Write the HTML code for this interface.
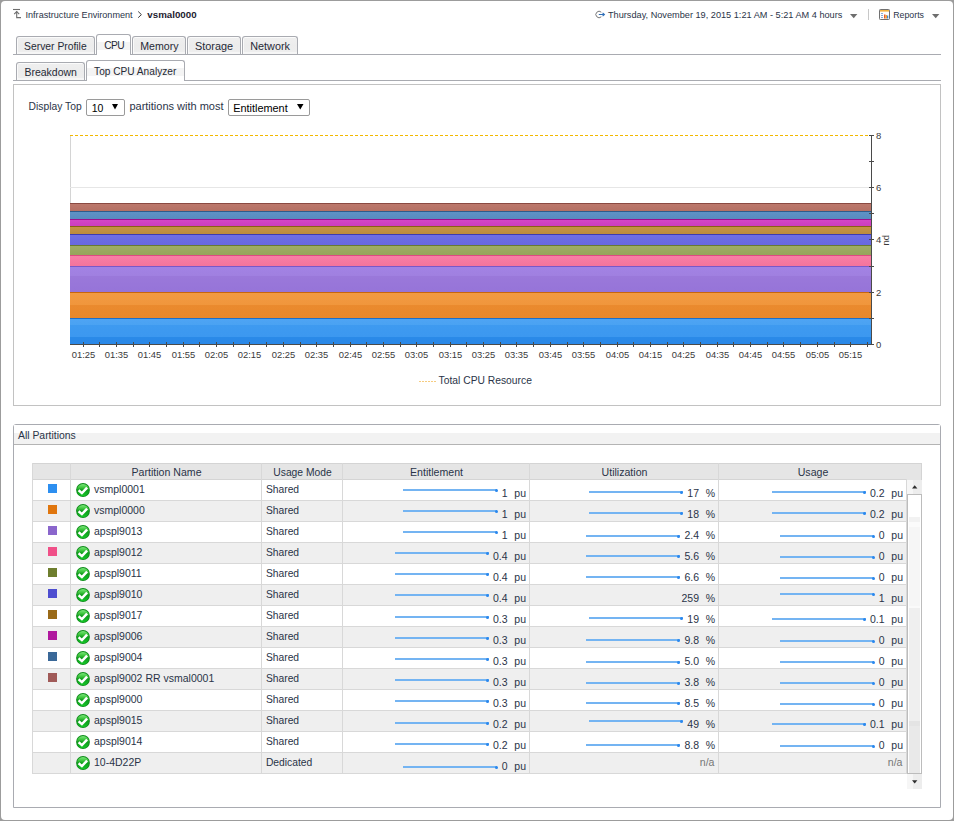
<!DOCTYPE html>
<html><head><meta charset="utf-8"><style>
html,body{margin:0;padding:0;}
body{width:954px;height:821px;overflow:hidden;background:#9c9c9c;position:relative;font-family:"Liberation Sans", sans-serif;}
.frame{position:absolute;left:1px;top:1px;width:952px;height:819px;background:#fff;border-radius:4px;}
.a{position:absolute;}
.t{position:absolute;white-space:nowrap;line-height:1;}
</style></head><body>
<div class="frame"></div>
<svg class="a" style="left:12px;top:8px" width="10" height="11" viewBox="0 0 10 11">
<path d="M1 1.5H8" stroke="#6e6e6e" stroke-width="1.1" fill="none"/>
<path d="M4.7 3.5V9.6H9" stroke="#6e6e6e" stroke-width="1.1" fill="none"/>
<path d="M2.2 6.2L4.7 3.6L7.2 6.2" stroke="#6e6e6e" stroke-width="1.1" fill="none"/>
</svg>
<div class="t" style="left:25.5px;top:11.00px;font-size:9.1px;color:#2a3448;">Infrastructure Environment</div>
<svg class="a" style="left:137px;top:10px" width="6" height="9"><path d="M1.2 1.5L4.4 4.6L1.2 7.7" stroke="#3a3a3a" stroke-width="1" fill="none"/></svg>
<div class="t" style="left:147.3px;top:10.00px;font-size:9.75px;color:#1e2230;font-weight:bold;">vsmal0000</div>
<svg class="a" style="left:595px;top:10px" width="11" height="9" viewBox="0 0 11 9">
<path d="M6.3 2.2A3.2 3.2 0 1 0 6.3 6.8" stroke="#777" stroke-width="1" fill="none"/>
<path d="M3.8 4.5H9.3M7.6 2.9L9.4 4.5L7.6 6.1" stroke="#2f6fb8" stroke-width="1.1" fill="none"/>
</svg>
<div class="t" style="left:608px;top:11.00px;font-size:9.19px;color:#2a3448;">Thursday, November 19, 2015 1:21 AM - 5:21 AM 4 hours</div>
<svg class="a" style="left:850px;top:14px" width="8" height="5"><path d="M0 0H7.4L3.7 4.2Z" fill="#6e6e6e"/></svg>
<div class="a" style="left:868px;top:9px;width:1px;height:11px;background:#c8c8c8"></div>
<svg class="a" style="left:879px;top:9px" width="11" height="11" viewBox="0 0 11 11">
<rect x="0.5" y="0.5" width="10" height="10" rx="0.8" fill="#fdfdfd" stroke="#707070"/>
<rect x="1" y="1" width="9" height="1.6" fill="#f2b440"/>
<path d="M2 4.5H4M2 6.5H4M2 8.5H4" stroke="#7aa0d0" stroke-width="0.9"/>
<rect x="5" y="5.5" width="1.5" height="4" fill="#e85a2a"/>
<rect x="6.5" y="6" width="1.5" height="3.5" fill="#f0a030"/>
<rect x="8" y="6.5" width="1.3" height="3" fill="#3a8ad8"/>
</svg>
<div class="t" style="left:893.2px;top:11.00px;font-size:8.8px;color:#2a3448;">Reports</div>
<svg class="a" style="left:932px;top:14px" width="8" height="5"><path d="M0 0H7.4L3.7 4.2Z" fill="#6e6e6e"/></svg>
<div class="a" style="left:13px;top:54px;width:928px;height:1px;background:#a9abb1"></div>
<div class="a" style="left:16px;top:36px;width:77px;height:17px;background:linear-gradient(#fbfbfb 0,#fbfbfb 1px,#efefef 1px,#ececec 50%,#eeeeee 90%,#f6f6f6 90%);border:1px solid #a9abb1;border-bottom:none;border-radius:3px 3px 0 0;box-shadow:inset 1px 0 0 #fafafa;"></div>
<div class="t" style="left:24.1px;top:42.00px;font-size:10.33px;color:#262a36;">Server Profile</div>
<div class="a" style="left:96px;top:34px;width:33px;height:20px;background:linear-gradient(#fff 0,#fff 7px,#f4f4f4 7px,#f4f4f4 15px,#fff 15px);border:1px solid #a9abb1;border-bottom:none;border-radius:3px 3px 0 0;"></div>
<div class="t" style="left:104.2px;top:41.00px;font-size:10.2px;color:#262a36;letter-spacing:-0.6px;">CPU</div>
<div class="a" style="left:132px;top:36px;width:52px;height:17px;background:linear-gradient(#fbfbfb 0,#fbfbfb 1px,#efefef 1px,#ececec 50%,#eeeeee 90%,#f6f6f6 90%);border:1px solid #a9abb1;border-bottom:none;border-radius:3px 3px 0 0;box-shadow:inset 1px 0 0 #fafafa;"></div>
<div class="t" style="left:140.3px;top:41.00px;font-size:10.6px;color:#262a36;">Memory</div>
<div class="a" style="left:187px;top:36px;width:52px;height:17px;background:linear-gradient(#fbfbfb 0,#fbfbfb 1px,#efefef 1px,#ececec 50%,#eeeeee 90%,#f6f6f6 90%);border:1px solid #a9abb1;border-bottom:none;border-radius:3px 3px 0 0;box-shadow:inset 1px 0 0 #fafafa;"></div>
<div class="t" style="left:195px;top:41.00px;font-size:10.86px;color:#262a36;">Storage</div>
<div class="a" style="left:242px;top:36px;width:54px;height:17px;background:linear-gradient(#fbfbfb 0,#fbfbfb 1px,#efefef 1px,#ececec 50%,#eeeeee 90%,#f6f6f6 90%);border:1px solid #a9abb1;border-bottom:none;border-radius:3px 3px 0 0;box-shadow:inset 1px 0 0 #fafafa;"></div>
<div class="t" style="left:250.3px;top:41.00px;font-size:10.8px;color:#262a36;">Network</div>
<div class="a" style="left:13px;top:80px;width:928px;height:1px;background:#a9abb1"></div>
<div class="a" style="left:16px;top:62px;width:67px;height:17px;background:linear-gradient(#fbfbfb 0,#fbfbfb 1px,#efefef 1px,#ececec 50%,#eeeeee 90%,#f6f6f6 90%);border:1px solid #a9abb1;border-bottom:none;border-radius:3px 3px 0 0;box-shadow:inset 1px 0 0 #fafafa;"></div>
<div class="t" style="left:24.4px;top:67.00px;font-size:10.5px;color:#262a36;">Breakdown</div>
<div class="a" style="left:86px;top:60px;width:97px;height:20px;background:linear-gradient(#fff 0,#fff 7px,#f4f4f4 7px,#f4f4f4 15px,#fff 15px);border:1px solid #a9abb1;border-bottom:none;border-radius:3px 3px 0 0;"></div>
<div class="t" style="left:94.1px;top:67.00px;font-size:10.15px;color:#262a36;">Top CPU Analyzer</div>
<div class="a" style="left:13px;top:84px;width:926px;height:320px;border:1px solid #c2c2c2;background:#fff"></div>
<div class="t" style="left:28.6px;top:102.00px;font-size:10.3px;color:#2a3448;">Display Top</div>
<div class="a" style="left:86px;top:99px;width:37px;height:15px;border:1px solid #9a9a9a;border-radius:2px;background:#fff"></div>
<div class="t" style="left:91.7px;top:103.00px;font-size:10.5px;color:#000;">10</div>
<svg class="a" style="left:112px;top:104px" width="6" height="6"><path d="M0 0H6L3 5.5Z" fill="#000"/></svg>
<div class="t" style="left:129.4px;top:101.00px;font-size:11px;color:#2a3448;">partitions with most</div>
<div class="a" style="left:228px;top:99px;width:80px;height:15px;border:1px solid #9a9a9a;border-radius:2px;background:#fff"></div>
<div class="t" style="left:233.2px;top:103.00px;font-size:10.9px;color:#000;">Entitlement</div>
<svg class="a" style="left:297px;top:104px" width="7" height="6"><path d="M0 0H6.5L3.25 5.5Z" fill="#000"/></svg>
<div class="a" style="left:70px;top:135px;width:1px;height:209px;background:#d4d4d4"></div>
<div class="a" style="left:70px;top:187px;width:801px;height:1px;background:#e6e6e6"></div>
<div class="a" style="left:70px;top:240px;width:801px;height:1px;background:#e6e6e6"></div>
<div class="a" style="left:70px;top:292px;width:801px;height:1px;background:#e6e6e6"></div>
<div class="a" style="left:70px;top:203px;width:801px;height:8px;background:linear-gradient(#bc786c,#b47064);border-top:1px solid #8a4a42;box-sizing:border-box"></div>
<div class="a" style="left:70px;top:211px;width:801px;height:8px;background:linear-gradient(#5e92c6,#588cc0);border-top:1px solid #2e5c8c;box-sizing:border-box"></div>
<div class="a" style="left:70px;top:219px;width:801px;height:7px;background:linear-gradient(#d446c6,#cc3ebe);border-top:1px solid #9a1090;box-sizing:border-box"></div>
<div class="a" style="left:70px;top:226px;width:801px;height:8px;background:linear-gradient(#c49444,#bc8c3c);border-top:1px solid #8a6014;box-sizing:border-box"></div>
<div class="a" style="left:70px;top:234px;width:801px;height:11px;background:linear-gradient(#6e6ee4,#6868de);border-top:1px solid #3c3cb0;box-sizing:border-box"></div>
<div class="a" style="left:70px;top:245px;width:801px;height:10px;background:linear-gradient(#9eac64,#96a45c);border-top:1px solid #687a30;box-sizing:border-box"></div>
<div class="a" style="left:70px;top:255px;width:801px;height:11px;background:linear-gradient(#f87ea6,#f4749c);border-top:1px solid #de4a82;box-sizing:border-box"></div>
<div class="a" style="left:70px;top:266px;width:801px;height:26px;background:linear-gradient(#a282e4 0,#a080e0 38%,#9a78da 38%,#9674d8 100%);border-top:1px solid #7a58c8;box-sizing:border-box"></div>
<div class="a" style="left:70px;top:292px;width:801px;height:26px;background:linear-gradient(#f29a42 0,#f0963c 48%,#ea8a2e 48%,#e8882c 100%);border-top:1px solid #c8660e;box-sizing:border-box"></div>
<div class="a" style="left:70px;top:318px;width:801px;height:26px;background:linear-gradient(#4ea4f4 0,#4aa2f2 26%,#3e9af0 26%,#3c98f0 72%,#2a8ae8 72%,#2a88e8 100%);border-top:1px solid #1e6ec8;box-sizing:border-box"></div>
<div class="a" style="left:70px;top:135px;width:801px;height:1px;background:repeating-linear-gradient(90deg,#f2b800 0,#f2b800 3px,transparent 3px,transparent 5px)"></div>
<div class="a" style="left:871px;top:135px;width:1px;height:210px;background:#4a4a4a"></div>
<div class="a" style="left:869px;top:135px;width:5px;height:1px;background:#4a4a4a"></div>
<div class="a" style="left:869px;top:161px;width:5px;height:1px;background:#4a4a4a"></div>
<div class="a" style="left:869px;top:187px;width:5px;height:1px;background:#4a4a4a"></div>
<div class="a" style="left:869px;top:213px;width:5px;height:1px;background:#4a4a4a"></div>
<div class="a" style="left:869px;top:239px;width:5px;height:1px;background:#4a4a4a"></div>
<div class="a" style="left:869px;top:266px;width:5px;height:1px;background:#4a4a4a"></div>
<div class="a" style="left:869px;top:292px;width:5px;height:1px;background:#4a4a4a"></div>
<div class="a" style="left:869px;top:318px;width:5px;height:1px;background:#4a4a4a"></div>
<div class="a" style="left:869px;top:344px;width:5px;height:1px;background:#4a4a4a"></div>
<div class="t" style="left:876px;top:340.00px;font-size:9.5px;color:#3a3a3a;">0</div>
<div class="t" style="left:876px;top:288.00px;font-size:9.5px;color:#3a3a3a;">2</div>
<div class="t" style="left:876px;top:235.00px;font-size:9.5px;color:#3a3a3a;">4</div>
<div class="t" style="left:876px;top:183.00px;font-size:9.5px;color:#3a3a3a;">6</div>
<div class="t" style="left:876px;top:131.00px;font-size:9.5px;color:#3a3a3a;">8</div>
<div class="t" style="top:234.5px;left:891.5px;font-size:9.5px;color:#3a3a3a;transform:rotate(90deg);transform-origin:0 0;">pu</div>
<div class="a" style="left:70px;top:344px;width:802px;height:1px;background:#4a4a4a"></div>
<div class="a" style="left:83px;top:342px;width:1px;height:5px;background:#4a4a4a"></div>
<div class="a" style="left:99px;top:342px;width:1px;height:5px;background:#4a4a4a"></div>
<div class="a" style="left:116px;top:342px;width:1px;height:5px;background:#4a4a4a"></div>
<div class="a" style="left:133px;top:342px;width:1px;height:5px;background:#4a4a4a"></div>
<div class="a" style="left:149px;top:342px;width:1px;height:5px;background:#4a4a4a"></div>
<div class="a" style="left:166px;top:342px;width:1px;height:5px;background:#4a4a4a"></div>
<div class="a" style="left:183px;top:342px;width:1px;height:5px;background:#4a4a4a"></div>
<div class="a" style="left:199px;top:342px;width:1px;height:5px;background:#4a4a4a"></div>
<div class="a" style="left:216px;top:342px;width:1px;height:5px;background:#4a4a4a"></div>
<div class="a" style="left:233px;top:342px;width:1px;height:5px;background:#4a4a4a"></div>
<div class="a" style="left:249px;top:342px;width:1px;height:5px;background:#4a4a4a"></div>
<div class="a" style="left:266px;top:342px;width:1px;height:5px;background:#4a4a4a"></div>
<div class="a" style="left:283px;top:342px;width:1px;height:5px;background:#4a4a4a"></div>
<div class="a" style="left:300px;top:342px;width:1px;height:5px;background:#4a4a4a"></div>
<div class="a" style="left:316px;top:342px;width:1px;height:5px;background:#4a4a4a"></div>
<div class="a" style="left:333px;top:342px;width:1px;height:5px;background:#4a4a4a"></div>
<div class="a" style="left:350px;top:342px;width:1px;height:5px;background:#4a4a4a"></div>
<div class="a" style="left:366px;top:342px;width:1px;height:5px;background:#4a4a4a"></div>
<div class="a" style="left:383px;top:342px;width:1px;height:5px;background:#4a4a4a"></div>
<div class="a" style="left:400px;top:342px;width:1px;height:5px;background:#4a4a4a"></div>
<div class="a" style="left:416px;top:342px;width:1px;height:5px;background:#4a4a4a"></div>
<div class="a" style="left:433px;top:342px;width:1px;height:5px;background:#4a4a4a"></div>
<div class="a" style="left:450px;top:342px;width:1px;height:5px;background:#4a4a4a"></div>
<div class="a" style="left:466px;top:342px;width:1px;height:5px;background:#4a4a4a"></div>
<div class="a" style="left:483px;top:342px;width:1px;height:5px;background:#4a4a4a"></div>
<div class="a" style="left:500px;top:342px;width:1px;height:5px;background:#4a4a4a"></div>
<div class="a" style="left:516px;top:342px;width:1px;height:5px;background:#4a4a4a"></div>
<div class="a" style="left:533px;top:342px;width:1px;height:5px;background:#4a4a4a"></div>
<div class="a" style="left:550px;top:342px;width:1px;height:5px;background:#4a4a4a"></div>
<div class="a" style="left:567px;top:342px;width:1px;height:5px;background:#4a4a4a"></div>
<div class="a" style="left:583px;top:342px;width:1px;height:5px;background:#4a4a4a"></div>
<div class="a" style="left:600px;top:342px;width:1px;height:5px;background:#4a4a4a"></div>
<div class="a" style="left:617px;top:342px;width:1px;height:5px;background:#4a4a4a"></div>
<div class="a" style="left:633px;top:342px;width:1px;height:5px;background:#4a4a4a"></div>
<div class="a" style="left:650px;top:342px;width:1px;height:5px;background:#4a4a4a"></div>
<div class="a" style="left:667px;top:342px;width:1px;height:5px;background:#4a4a4a"></div>
<div class="a" style="left:683px;top:342px;width:1px;height:5px;background:#4a4a4a"></div>
<div class="a" style="left:700px;top:342px;width:1px;height:5px;background:#4a4a4a"></div>
<div class="a" style="left:717px;top:342px;width:1px;height:5px;background:#4a4a4a"></div>
<div class="a" style="left:733px;top:342px;width:1px;height:5px;background:#4a4a4a"></div>
<div class="a" style="left:750px;top:342px;width:1px;height:5px;background:#4a4a4a"></div>
<div class="a" style="left:767px;top:342px;width:1px;height:5px;background:#4a4a4a"></div>
<div class="a" style="left:783px;top:342px;width:1px;height:5px;background:#4a4a4a"></div>
<div class="a" style="left:800px;top:342px;width:1px;height:5px;background:#4a4a4a"></div>
<div class="a" style="left:817px;top:342px;width:1px;height:5px;background:#4a4a4a"></div>
<div class="a" style="left:834px;top:342px;width:1px;height:5px;background:#4a4a4a"></div>
<div class="a" style="left:850px;top:342px;width:1px;height:5px;background:#4a4a4a"></div>
<div class="a" style="left:867px;top:342px;width:1px;height:5px;background:#4a4a4a"></div>
<div class="t" style="left:-16.5px;width:200px;text-align:center;top:350.00px;font-size:9.4px;color:#3a3a3a;">01:25</div>
<div class="t" style="left:16.5px;width:200px;text-align:center;top:350.00px;font-size:9.4px;color:#3a3a3a;">01:35</div>
<div class="t" style="left:49.5px;width:200px;text-align:center;top:350.00px;font-size:9.4px;color:#3a3a3a;">01:45</div>
<div class="t" style="left:83.5px;width:200px;text-align:center;top:350.00px;font-size:9.4px;color:#3a3a3a;">01:55</div>
<div class="t" style="left:116.5px;width:200px;text-align:center;top:350.00px;font-size:9.4px;color:#3a3a3a;">02:05</div>
<div class="t" style="left:149.5px;width:200px;text-align:center;top:350.00px;font-size:9.4px;color:#3a3a3a;">02:15</div>
<div class="t" style="left:183.5px;width:200px;text-align:center;top:350.00px;font-size:9.4px;color:#3a3a3a;">02:25</div>
<div class="t" style="left:216.5px;width:200px;text-align:center;top:350.00px;font-size:9.4px;color:#3a3a3a;">02:35</div>
<div class="t" style="left:250.5px;width:200px;text-align:center;top:350.00px;font-size:9.4px;color:#3a3a3a;">02:45</div>
<div class="t" style="left:283.5px;width:200px;text-align:center;top:350.00px;font-size:9.4px;color:#3a3a3a;">02:55</div>
<div class="t" style="left:316.5px;width:200px;text-align:center;top:350.00px;font-size:9.4px;color:#3a3a3a;">03:05</div>
<div class="t" style="left:350.5px;width:200px;text-align:center;top:350.00px;font-size:9.4px;color:#3a3a3a;">03:15</div>
<div class="t" style="left:383.5px;width:200px;text-align:center;top:350.00px;font-size:9.4px;color:#3a3a3a;">03:25</div>
<div class="t" style="left:416.5px;width:200px;text-align:center;top:350.00px;font-size:9.4px;color:#3a3a3a;">03:35</div>
<div class="t" style="left:450.5px;width:200px;text-align:center;top:350.00px;font-size:9.4px;color:#3a3a3a;">03:45</div>
<div class="t" style="left:483.5px;width:200px;text-align:center;top:350.00px;font-size:9.4px;color:#3a3a3a;">03:55</div>
<div class="t" style="left:517.5px;width:200px;text-align:center;top:350.00px;font-size:9.4px;color:#3a3a3a;">04:05</div>
<div class="t" style="left:550.5px;width:200px;text-align:center;top:350.00px;font-size:9.4px;color:#3a3a3a;">04:15</div>
<div class="t" style="left:583.5px;width:200px;text-align:center;top:350.00px;font-size:9.4px;color:#3a3a3a;">04:25</div>
<div class="t" style="left:617.5px;width:200px;text-align:center;top:350.00px;font-size:9.4px;color:#3a3a3a;">04:35</div>
<div class="t" style="left:650.5px;width:200px;text-align:center;top:350.00px;font-size:9.4px;color:#3a3a3a;">04:45</div>
<div class="t" style="left:683.5px;width:200px;text-align:center;top:350.00px;font-size:9.4px;color:#3a3a3a;">04:55</div>
<div class="t" style="left:717.5px;width:200px;text-align:center;top:350.00px;font-size:9.4px;color:#3a3a3a;">05:05</div>
<div class="t" style="left:750.5px;width:200px;text-align:center;top:350.00px;font-size:9.4px;color:#3a3a3a;">05:15</div>
<div class="a" style="left:419px;top:381px;width:17px;height:1px;background:repeating-linear-gradient(90deg,#f6cc80 0,#f6cc80 2px,transparent 2px,transparent 3px)"></div>
<div class="t" style="left:438.6px;top:376.00px;font-size:10.3px;color:#2a3448;">Total CPU Resource</div>
<div class="a" style="left:13px;top:424px;width:926px;height:382px;border:1px solid #a9abb1;border-radius:3px 3px 0 0;background:#fff"></div>
<div class="a" style="left:14px;top:425px;width:926px;height:19px;background:linear-gradient(#fff 0,#fff 40%,#f2f2f2 40%,#f2f2f2 100%);border-bottom:1px solid #b4b4b4;box-sizing:border-box;height:20px"></div>
<div class="t" style="left:18px;top:431.00px;font-size:10.4px;color:#2a3448;">All Partitions</div>
<div class="a" style="left:32px;top:463px;width:890px;height:17px;background:#e5e5e5;border-top:1px solid #d4d4d4;box-sizing:border-box"></div>
<div class="a" style="left:32px;top:479px;width:874px;height:1px;background:#d4d4d4"></div>
<div class="a" style="left:32px;top:480px;width:874px;height:20px;background:#ffffff"></div>
<div class="a" style="left:32px;top:500px;width:874px;height:1px;background:#d8d8d8"></div>
<div class="a" style="left:32px;top:501px;width:874px;height:20px;background:#efefef"></div>
<div class="a" style="left:32px;top:521px;width:874px;height:1px;background:#d8d8d8"></div>
<div class="a" style="left:32px;top:522px;width:874px;height:20px;background:#ffffff"></div>
<div class="a" style="left:32px;top:542px;width:874px;height:1px;background:#d8d8d8"></div>
<div class="a" style="left:32px;top:543px;width:874px;height:20px;background:#efefef"></div>
<div class="a" style="left:32px;top:563px;width:874px;height:1px;background:#d8d8d8"></div>
<div class="a" style="left:32px;top:564px;width:874px;height:20px;background:#ffffff"></div>
<div class="a" style="left:32px;top:584px;width:874px;height:1px;background:#d8d8d8"></div>
<div class="a" style="left:32px;top:585px;width:874px;height:20px;background:#efefef"></div>
<div class="a" style="left:32px;top:605px;width:874px;height:1px;background:#d8d8d8"></div>
<div class="a" style="left:32px;top:606px;width:874px;height:20px;background:#ffffff"></div>
<div class="a" style="left:32px;top:626px;width:874px;height:1px;background:#d8d8d8"></div>
<div class="a" style="left:32px;top:627px;width:874px;height:20px;background:#efefef"></div>
<div class="a" style="left:32px;top:647px;width:874px;height:1px;background:#d8d8d8"></div>
<div class="a" style="left:32px;top:648px;width:874px;height:20px;background:#ffffff"></div>
<div class="a" style="left:32px;top:668px;width:874px;height:1px;background:#d8d8d8"></div>
<div class="a" style="left:32px;top:669px;width:874px;height:20px;background:#efefef"></div>
<div class="a" style="left:32px;top:689px;width:874px;height:1px;background:#d8d8d8"></div>
<div class="a" style="left:32px;top:690px;width:874px;height:20px;background:#ffffff"></div>
<div class="a" style="left:32px;top:710px;width:874px;height:1px;background:#d8d8d8"></div>
<div class="a" style="left:32px;top:711px;width:874px;height:20px;background:#efefef"></div>
<div class="a" style="left:32px;top:731px;width:874px;height:1px;background:#d8d8d8"></div>
<div class="a" style="left:32px;top:732px;width:874px;height:20px;background:#ffffff"></div>
<div class="a" style="left:32px;top:752px;width:874px;height:1px;background:#d8d8d8"></div>
<div class="a" style="left:32px;top:753px;width:874px;height:20px;background:#efefef"></div>
<div class="a" style="left:32px;top:773px;width:874px;height:1px;background:#d8d8d8"></div>
<div class="a" style="left:32px;top:463px;width:1px;height:311px;background:#d8d8d8"></div>
<div class="a" style="left:70px;top:463px;width:1px;height:311px;background:#d8d8d8"></div>
<div class="a" style="left:261px;top:463px;width:1px;height:311px;background:#d8d8d8"></div>
<div class="a" style="left:342px;top:463px;width:1px;height:311px;background:#d8d8d8"></div>
<div class="a" style="left:529px;top:463px;width:1px;height:311px;background:#d8d8d8"></div>
<div class="a" style="left:718px;top:463px;width:1px;height:311px;background:#d8d8d8"></div>
<div class="a" style="left:906px;top:479px;width:1px;height:295px;background:#d8d8d8"></div>
<div class="a" style="left:921px;top:463px;width:1px;height:17px;background:#d4d4d4"></div>
<div class="t" style="left:66.5px;width:200px;text-align:center;top:467.00px;font-size:10.6px;color:#2a3448;">Partition Name</div>
<div class="t" style="left:202.5px;width:200px;text-align:center;top:468.00px;font-size:10.3px;color:#2a3448;">Usage Mode</div>
<div class="t" style="left:336.5px;width:200px;text-align:center;top:467.00px;font-size:10.6px;color:#2a3448;">Entitlement</div>
<div class="t" style="left:524.5px;width:200px;text-align:center;top:467.00px;font-size:10.6px;color:#2a3448;">Utilization</div>
<div class="t" style="left:713.0px;width:200px;text-align:center;top:467.00px;font-size:10.6px;color:#2a3448;">Usage</div>
<svg width="0" height="0" style="position:absolute"><defs><linearGradient id="cg" x1="0" y1="0" x2="0" y2="1"><stop offset="0" stop-color="#7ae87a"/><stop offset="0.3" stop-color="#3cc43c"/><stop offset="0.5" stop-color="#0e9a1c"/><stop offset="1" stop-color="#14c828"/></linearGradient></defs></svg>
<div class="a" style="left:48px;top:484px;width:9px;height:9px;background:#2d8ff0"></div>
<svg class="a" style="left:76px;top:483px" width="14" height="14" viewBox="0 0 14 14">
<circle cx="7" cy="7" r="6.9" fill="#0c8a18"/>
<circle cx="7" cy="7.1" r="6.1" fill="url(#cg)"/>
<path d="M2.6 7.3L5.9 10.1L11.1 4.6" stroke="#fff" stroke-width="2.5" fill="none" stroke-linejoin="miter"/>
</svg>
<div class="t" style="left:94px;top:484.00px;font-size:10.5px;color:#2a3448;">vsmpl0001</div>
<div class="t" style="left:265.9px;top:485.00px;font-size:10.3px;color:#2a3448;">Shared</div>
<div class="a" style="left:48px;top:505px;width:9px;height:9px;background:#e0760e"></div>
<svg class="a" style="left:76px;top:504px" width="14" height="14" viewBox="0 0 14 14">
<circle cx="7" cy="7" r="6.9" fill="#0c8a18"/>
<circle cx="7" cy="7.1" r="6.1" fill="url(#cg)"/>
<path d="M2.6 7.3L5.9 10.1L11.1 4.6" stroke="#fff" stroke-width="2.5" fill="none" stroke-linejoin="miter"/>
</svg>
<div class="t" style="left:94px;top:505.00px;font-size:10.5px;color:#2a3448;">vsmpl0000</div>
<div class="t" style="left:265.9px;top:506.00px;font-size:10.3px;color:#2a3448;">Shared</div>
<div class="a" style="left:48px;top:526px;width:9px;height:9px;background:#8a66cc"></div>
<svg class="a" style="left:76px;top:525px" width="14" height="14" viewBox="0 0 14 14">
<circle cx="7" cy="7" r="6.9" fill="#0c8a18"/>
<circle cx="7" cy="7.1" r="6.1" fill="url(#cg)"/>
<path d="M2.6 7.3L5.9 10.1L11.1 4.6" stroke="#fff" stroke-width="2.5" fill="none" stroke-linejoin="miter"/>
</svg>
<div class="t" style="left:94px;top:526.00px;font-size:10.5px;color:#2a3448;">apspl9013</div>
<div class="t" style="left:265.9px;top:527.00px;font-size:10.3px;color:#2a3448;">Shared</div>
<div class="a" style="left:48px;top:547px;width:9px;height:9px;background:#f05088"></div>
<svg class="a" style="left:76px;top:546px" width="14" height="14" viewBox="0 0 14 14">
<circle cx="7" cy="7" r="6.9" fill="#0c8a18"/>
<circle cx="7" cy="7.1" r="6.1" fill="url(#cg)"/>
<path d="M2.6 7.3L5.9 10.1L11.1 4.6" stroke="#fff" stroke-width="2.5" fill="none" stroke-linejoin="miter"/>
</svg>
<div class="t" style="left:94px;top:547.00px;font-size:10.5px;color:#2a3448;">apspl9012</div>
<div class="t" style="left:265.9px;top:548.00px;font-size:10.3px;color:#2a3448;">Shared</div>
<div class="a" style="left:48px;top:568px;width:9px;height:9px;background:#6e7e2e"></div>
<svg class="a" style="left:76px;top:567px" width="14" height="14" viewBox="0 0 14 14">
<circle cx="7" cy="7" r="6.9" fill="#0c8a18"/>
<circle cx="7" cy="7.1" r="6.1" fill="url(#cg)"/>
<path d="M2.6 7.3L5.9 10.1L11.1 4.6" stroke="#fff" stroke-width="2.5" fill="none" stroke-linejoin="miter"/>
</svg>
<div class="t" style="left:94px;top:568.00px;font-size:10.5px;color:#2a3448;">apspl9011</div>
<div class="t" style="left:265.9px;top:569.00px;font-size:10.3px;color:#2a3448;">Shared</div>
<div class="a" style="left:48px;top:589px;width:9px;height:9px;background:#4e4ed0"></div>
<svg class="a" style="left:76px;top:588px" width="14" height="14" viewBox="0 0 14 14">
<circle cx="7" cy="7" r="6.9" fill="#0c8a18"/>
<circle cx="7" cy="7.1" r="6.1" fill="url(#cg)"/>
<path d="M2.6 7.3L5.9 10.1L11.1 4.6" stroke="#fff" stroke-width="2.5" fill="none" stroke-linejoin="miter"/>
</svg>
<div class="t" style="left:94px;top:589.00px;font-size:10.5px;color:#2a3448;">apspl9010</div>
<div class="t" style="left:265.9px;top:590.00px;font-size:10.3px;color:#2a3448;">Shared</div>
<div class="a" style="left:48px;top:610px;width:9px;height:9px;background:#9a6a18"></div>
<svg class="a" style="left:76px;top:609px" width="14" height="14" viewBox="0 0 14 14">
<circle cx="7" cy="7" r="6.9" fill="#0c8a18"/>
<circle cx="7" cy="7.1" r="6.1" fill="url(#cg)"/>
<path d="M2.6 7.3L5.9 10.1L11.1 4.6" stroke="#fff" stroke-width="2.5" fill="none" stroke-linejoin="miter"/>
</svg>
<div class="t" style="left:94px;top:610.00px;font-size:10.5px;color:#2a3448;">apspl9017</div>
<div class="t" style="left:265.9px;top:611.00px;font-size:10.3px;color:#2a3448;">Shared</div>
<div class="a" style="left:48px;top:631px;width:9px;height:9px;background:#b0189e"></div>
<svg class="a" style="left:76px;top:630px" width="14" height="14" viewBox="0 0 14 14">
<circle cx="7" cy="7" r="6.9" fill="#0c8a18"/>
<circle cx="7" cy="7.1" r="6.1" fill="url(#cg)"/>
<path d="M2.6 7.3L5.9 10.1L11.1 4.6" stroke="#fff" stroke-width="2.5" fill="none" stroke-linejoin="miter"/>
</svg>
<div class="t" style="left:94px;top:631.00px;font-size:10.5px;color:#2a3448;">apspl9006</div>
<div class="t" style="left:265.9px;top:632.00px;font-size:10.3px;color:#2a3448;">Shared</div>
<div class="a" style="left:48px;top:652px;width:9px;height:9px;background:#3a6898"></div>
<svg class="a" style="left:76px;top:651px" width="14" height="14" viewBox="0 0 14 14">
<circle cx="7" cy="7" r="6.9" fill="#0c8a18"/>
<circle cx="7" cy="7.1" r="6.1" fill="url(#cg)"/>
<path d="M2.6 7.3L5.9 10.1L11.1 4.6" stroke="#fff" stroke-width="2.5" fill="none" stroke-linejoin="miter"/>
</svg>
<div class="t" style="left:94px;top:652.00px;font-size:10.5px;color:#2a3448;">apspl9004</div>
<div class="t" style="left:265.9px;top:653.00px;font-size:10.3px;color:#2a3448;">Shared</div>
<div class="a" style="left:48px;top:673px;width:9px;height:9px;background:#a05a58"></div>
<svg class="a" style="left:76px;top:672px" width="14" height="14" viewBox="0 0 14 14">
<circle cx="7" cy="7" r="6.9" fill="#0c8a18"/>
<circle cx="7" cy="7.1" r="6.1" fill="url(#cg)"/>
<path d="M2.6 7.3L5.9 10.1L11.1 4.6" stroke="#fff" stroke-width="2.5" fill="none" stroke-linejoin="miter"/>
</svg>
<div class="t" style="left:94px;top:673.00px;font-size:10.5px;color:#2a3448;">apspl9002 RR vsmal0001</div>
<div class="t" style="left:265.9px;top:674.00px;font-size:10.3px;color:#2a3448;">Shared</div>
<svg class="a" style="left:76px;top:693px" width="14" height="14" viewBox="0 0 14 14">
<circle cx="7" cy="7" r="6.9" fill="#0c8a18"/>
<circle cx="7" cy="7.1" r="6.1" fill="url(#cg)"/>
<path d="M2.6 7.3L5.9 10.1L11.1 4.6" stroke="#fff" stroke-width="2.5" fill="none" stroke-linejoin="miter"/>
</svg>
<div class="t" style="left:94px;top:694.00px;font-size:10.5px;color:#2a3448;">apspl9000</div>
<div class="t" style="left:265.9px;top:695.00px;font-size:10.3px;color:#2a3448;">Shared</div>
<svg class="a" style="left:76px;top:714px" width="14" height="14" viewBox="0 0 14 14">
<circle cx="7" cy="7" r="6.9" fill="#0c8a18"/>
<circle cx="7" cy="7.1" r="6.1" fill="url(#cg)"/>
<path d="M2.6 7.3L5.9 10.1L11.1 4.6" stroke="#fff" stroke-width="2.5" fill="none" stroke-linejoin="miter"/>
</svg>
<div class="t" style="left:94px;top:715.00px;font-size:10.5px;color:#2a3448;">apspl9015</div>
<div class="t" style="left:265.9px;top:716.00px;font-size:10.3px;color:#2a3448;">Shared</div>
<svg class="a" style="left:76px;top:735px" width="14" height="14" viewBox="0 0 14 14">
<circle cx="7" cy="7" r="6.9" fill="#0c8a18"/>
<circle cx="7" cy="7.1" r="6.1" fill="url(#cg)"/>
<path d="M2.6 7.3L5.9 10.1L11.1 4.6" stroke="#fff" stroke-width="2.5" fill="none" stroke-linejoin="miter"/>
</svg>
<div class="t" style="left:94px;top:736.00px;font-size:10.5px;color:#2a3448;">apspl9014</div>
<div class="t" style="left:265.9px;top:737.00px;font-size:10.3px;color:#2a3448;">Shared</div>
<svg class="a" style="left:76px;top:756px" width="14" height="14" viewBox="0 0 14 14">
<circle cx="7" cy="7" r="6.9" fill="#0c8a18"/>
<circle cx="7" cy="7.1" r="6.1" fill="url(#cg)"/>
<path d="M2.6 7.3L5.9 10.1L11.1 4.6" stroke="#fff" stroke-width="2.5" fill="none" stroke-linejoin="miter"/>
</svg>
<div class="t" style="left:94px;top:757.00px;font-size:10.5px;color:#2a3448;">10-4D22P</div>
<div class="t" style="left:265.9px;top:758.00px;font-size:10.3px;color:#2a3448;">Dedicated</div>
<div class="t" style="right:428px;top:488.00px;font-size:10.5px;color:#2a3448;">pu</div>
<div class="t" style="right:446.4px;top:488.00px;font-size:10.5px;color:#2a3448;">1</div>
<div class="a" style="left:403px;top:489px;width:94px;height:2px;background:#74b4f2"></div>
<div class="a" style="left:494.7px;top:488.5px;width:3px;height:3px;border-radius:50%;background:#2a88ee"></div>
<div class="t" style="right:239px;top:488.00px;font-size:10.5px;color:#2a3448;">%</div>
<div class="t" style="right:255px;top:488.00px;font-size:10.5px;color:#2a3448;">17</div>
<div class="a" style="left:589px;top:491px;width:94px;height:2px;background:#74b4f2"></div>
<div class="a" style="left:680.2px;top:490.5px;width:3px;height:3px;border-radius:50%;background:#2a88ee"></div>
<div class="t" style="right:51px;top:488.00px;font-size:10.5px;color:#2a3448;">pu</div>
<div class="t" style="right:69.39999999999998px;top:488.00px;font-size:10.5px;color:#2a3448;">0.2</div>
<div class="a" style="left:772px;top:491px;width:94px;height:2px;background:#74b4f2"></div>
<div class="a" style="left:862.9px;top:490.5px;width:3px;height:3px;border-radius:50%;background:#2a88ee"></div>
<div class="t" style="right:428px;top:509.00px;font-size:10.5px;color:#2a3448;">pu</div>
<div class="t" style="right:446.4px;top:509.00px;font-size:10.5px;color:#2a3448;">1</div>
<div class="a" style="left:403px;top:510px;width:94px;height:2px;background:#74b4f2"></div>
<div class="a" style="left:494.7px;top:509.5px;width:3px;height:3px;border-radius:50%;background:#2a88ee"></div>
<div class="t" style="right:239px;top:509.00px;font-size:10.5px;color:#2a3448;">%</div>
<div class="t" style="right:255px;top:509.00px;font-size:10.5px;color:#2a3448;">18</div>
<div class="a" style="left:589px;top:512px;width:94px;height:2px;background:#74b4f2"></div>
<div class="a" style="left:680.2px;top:511.5px;width:3px;height:3px;border-radius:50%;background:#2a88ee"></div>
<div class="t" style="right:51px;top:509.00px;font-size:10.5px;color:#2a3448;">pu</div>
<div class="t" style="right:69.39999999999998px;top:509.00px;font-size:10.5px;color:#2a3448;">0.2</div>
<div class="a" style="left:772px;top:512px;width:94px;height:2px;background:#74b4f2"></div>
<div class="a" style="left:862.9px;top:511.5px;width:3px;height:3px;border-radius:50%;background:#2a88ee"></div>
<div class="t" style="right:428px;top:530.00px;font-size:10.5px;color:#2a3448;">pu</div>
<div class="t" style="right:446.4px;top:530.00px;font-size:10.5px;color:#2a3448;">1</div>
<div class="a" style="left:403px;top:531px;width:94px;height:2px;background:#74b4f2"></div>
<div class="a" style="left:494.7px;top:530.5px;width:3px;height:3px;border-radius:50%;background:#2a88ee"></div>
<div class="t" style="right:239px;top:530.00px;font-size:10.5px;color:#2a3448;">%</div>
<div class="t" style="right:255px;top:530.00px;font-size:10.5px;color:#2a3448;">2.4</div>
<div class="a" style="left:586px;top:535px;width:94px;height:2px;background:#74b4f2"></div>
<div class="a" style="left:677.3px;top:534.5px;width:3px;height:3px;border-radius:50%;background:#2a88ee"></div>
<div class="t" style="right:51px;top:530.00px;font-size:10.5px;color:#2a3448;">pu</div>
<div class="t" style="right:69.39999999999998px;top:530.00px;font-size:10.5px;color:#2a3448;">0</div>
<div class="a" style="left:780px;top:535px;width:94px;height:2px;background:#74b4f2"></div>
<div class="a" style="left:871.7px;top:534.5px;width:3px;height:3px;border-radius:50%;background:#2a88ee"></div>
<div class="t" style="right:428px;top:551.00px;font-size:10.5px;color:#2a3448;">pu</div>
<div class="t" style="right:446.4px;top:551.00px;font-size:10.5px;color:#2a3448;">0.4</div>
<div class="a" style="left:395px;top:552px;width:94px;height:2px;background:#74b4f2"></div>
<div class="a" style="left:485.9px;top:551.5px;width:3px;height:3px;border-radius:50%;background:#2a88ee"></div>
<div class="t" style="right:239px;top:551.00px;font-size:10.5px;color:#2a3448;">%</div>
<div class="t" style="right:255px;top:551.00px;font-size:10.5px;color:#2a3448;">5.6</div>
<div class="a" style="left:586px;top:555px;width:94px;height:2px;background:#74b4f2"></div>
<div class="a" style="left:677.3px;top:554.5px;width:3px;height:3px;border-radius:50%;background:#2a88ee"></div>
<div class="t" style="right:51px;top:551.00px;font-size:10.5px;color:#2a3448;">pu</div>
<div class="t" style="right:69.39999999999998px;top:551.00px;font-size:10.5px;color:#2a3448;">0</div>
<div class="a" style="left:780px;top:556px;width:94px;height:2px;background:#74b4f2"></div>
<div class="a" style="left:871.7px;top:555.5px;width:3px;height:3px;border-radius:50%;background:#2a88ee"></div>
<div class="t" style="right:428px;top:572.00px;font-size:10.5px;color:#2a3448;">pu</div>
<div class="t" style="right:446.4px;top:572.00px;font-size:10.5px;color:#2a3448;">0.4</div>
<div class="a" style="left:395px;top:573px;width:94px;height:2px;background:#74b4f2"></div>
<div class="a" style="left:485.9px;top:572.5px;width:3px;height:3px;border-radius:50%;background:#2a88ee"></div>
<div class="t" style="right:239px;top:572.00px;font-size:10.5px;color:#2a3448;">%</div>
<div class="t" style="right:255px;top:572.00px;font-size:10.5px;color:#2a3448;">6.6</div>
<div class="a" style="left:586px;top:576px;width:94px;height:2px;background:#74b4f2"></div>
<div class="a" style="left:677.3px;top:575.5px;width:3px;height:3px;border-radius:50%;background:#2a88ee"></div>
<div class="t" style="right:51px;top:572.00px;font-size:10.5px;color:#2a3448;">pu</div>
<div class="t" style="right:69.39999999999998px;top:572.00px;font-size:10.5px;color:#2a3448;">0</div>
<div class="a" style="left:780px;top:577px;width:94px;height:2px;background:#74b4f2"></div>
<div class="a" style="left:871.7px;top:576.5px;width:3px;height:3px;border-radius:50%;background:#2a88ee"></div>
<div class="t" style="right:428px;top:593.00px;font-size:10.5px;color:#2a3448;">pu</div>
<div class="t" style="right:446.4px;top:593.00px;font-size:10.5px;color:#2a3448;">0.4</div>
<div class="a" style="left:395px;top:594px;width:94px;height:2px;background:#74b4f2"></div>
<div class="a" style="left:485.9px;top:593.5px;width:3px;height:3px;border-radius:50%;background:#2a88ee"></div>
<div class="t" style="right:239px;top:593.00px;font-size:10.5px;color:#2a3448;">%</div>
<div class="t" style="right:255px;top:593.00px;font-size:10.5px;color:#2a3448;">259</div>
<div class="t" style="right:51px;top:593.00px;font-size:10.5px;color:#2a3448;">pu</div>
<div class="t" style="right:69.39999999999998px;top:593.00px;font-size:10.5px;color:#2a3448;">1</div>
<div class="a" style="left:780px;top:593px;width:94px;height:2px;background:#74b4f2"></div>
<div class="a" style="left:871.7px;top:592.5px;width:3px;height:3px;border-radius:50%;background:#2a88ee"></div>
<div class="t" style="right:428px;top:614.00px;font-size:10.5px;color:#2a3448;">pu</div>
<div class="t" style="right:446.4px;top:614.00px;font-size:10.5px;color:#2a3448;">0.3</div>
<div class="a" style="left:395px;top:616px;width:94px;height:2px;background:#74b4f2"></div>
<div class="a" style="left:485.9px;top:615.5px;width:3px;height:3px;border-radius:50%;background:#2a88ee"></div>
<div class="t" style="right:239px;top:614.00px;font-size:10.5px;color:#2a3448;">%</div>
<div class="t" style="right:255px;top:614.00px;font-size:10.5px;color:#2a3448;">19</div>
<div class="a" style="left:589px;top:617px;width:94px;height:2px;background:#74b4f2"></div>
<div class="a" style="left:680.2px;top:616.5px;width:3px;height:3px;border-radius:50%;background:#2a88ee"></div>
<div class="t" style="right:51px;top:614.00px;font-size:10.5px;color:#2a3448;">pu</div>
<div class="t" style="right:69.39999999999998px;top:614.00px;font-size:10.5px;color:#2a3448;">0.1</div>
<div class="a" style="left:772px;top:618px;width:94px;height:2px;background:#74b4f2"></div>
<div class="a" style="left:862.9px;top:617.5px;width:3px;height:3px;border-radius:50%;background:#2a88ee"></div>
<div class="t" style="right:428px;top:635.00px;font-size:10.5px;color:#2a3448;">pu</div>
<div class="t" style="right:446.4px;top:635.00px;font-size:10.5px;color:#2a3448;">0.3</div>
<div class="a" style="left:395px;top:637px;width:94px;height:2px;background:#74b4f2"></div>
<div class="a" style="left:485.9px;top:636.5px;width:3px;height:3px;border-radius:50%;background:#2a88ee"></div>
<div class="t" style="right:239px;top:635.00px;font-size:10.5px;color:#2a3448;">%</div>
<div class="t" style="right:255px;top:635.00px;font-size:10.5px;color:#2a3448;">9.8</div>
<div class="a" style="left:586px;top:639px;width:94px;height:2px;background:#74b4f2"></div>
<div class="a" style="left:677.3px;top:638.5px;width:3px;height:3px;border-radius:50%;background:#2a88ee"></div>
<div class="t" style="right:51px;top:635.00px;font-size:10.5px;color:#2a3448;">pu</div>
<div class="t" style="right:69.39999999999998px;top:635.00px;font-size:10.5px;color:#2a3448;">0</div>
<div class="a" style="left:780px;top:640px;width:94px;height:2px;background:#74b4f2"></div>
<div class="a" style="left:871.7px;top:639.5px;width:3px;height:3px;border-radius:50%;background:#2a88ee"></div>
<div class="t" style="right:428px;top:656.00px;font-size:10.5px;color:#2a3448;">pu</div>
<div class="t" style="right:446.4px;top:656.00px;font-size:10.5px;color:#2a3448;">0.3</div>
<div class="a" style="left:395px;top:658px;width:94px;height:2px;background:#74b4f2"></div>
<div class="a" style="left:485.9px;top:657.5px;width:3px;height:3px;border-radius:50%;background:#2a88ee"></div>
<div class="t" style="right:239px;top:656.00px;font-size:10.5px;color:#2a3448;">%</div>
<div class="t" style="right:255px;top:656.00px;font-size:10.5px;color:#2a3448;">5.0</div>
<div class="a" style="left:586px;top:661px;width:94px;height:2px;background:#74b4f2"></div>
<div class="a" style="left:677.3px;top:660.5px;width:3px;height:3px;border-radius:50%;background:#2a88ee"></div>
<div class="t" style="right:51px;top:656.00px;font-size:10.5px;color:#2a3448;">pu</div>
<div class="t" style="right:69.39999999999998px;top:656.00px;font-size:10.5px;color:#2a3448;">0</div>
<div class="a" style="left:780px;top:661px;width:94px;height:2px;background:#74b4f2"></div>
<div class="a" style="left:871.7px;top:660.5px;width:3px;height:3px;border-radius:50%;background:#2a88ee"></div>
<div class="t" style="right:428px;top:677.00px;font-size:10.5px;color:#2a3448;">pu</div>
<div class="t" style="right:446.4px;top:677.00px;font-size:10.5px;color:#2a3448;">0.3</div>
<div class="a" style="left:395px;top:679px;width:94px;height:2px;background:#74b4f2"></div>
<div class="a" style="left:485.9px;top:678.5px;width:3px;height:3px;border-radius:50%;background:#2a88ee"></div>
<div class="t" style="right:239px;top:677.00px;font-size:10.5px;color:#2a3448;">%</div>
<div class="t" style="right:255px;top:677.00px;font-size:10.5px;color:#2a3448;">3.8</div>
<div class="a" style="left:586px;top:682px;width:94px;height:2px;background:#74b4f2"></div>
<div class="a" style="left:677.3px;top:681.5px;width:3px;height:3px;border-radius:50%;background:#2a88ee"></div>
<div class="t" style="right:51px;top:677.00px;font-size:10.5px;color:#2a3448;">pu</div>
<div class="t" style="right:69.39999999999998px;top:677.00px;font-size:10.5px;color:#2a3448;">0</div>
<div class="a" style="left:780px;top:682px;width:94px;height:2px;background:#74b4f2"></div>
<div class="a" style="left:871.7px;top:681.5px;width:3px;height:3px;border-radius:50%;background:#2a88ee"></div>
<div class="t" style="right:428px;top:698.00px;font-size:10.5px;color:#2a3448;">pu</div>
<div class="t" style="right:446.4px;top:698.00px;font-size:10.5px;color:#2a3448;">0.3</div>
<div class="a" style="left:395px;top:700px;width:94px;height:2px;background:#74b4f2"></div>
<div class="a" style="left:485.9px;top:699.5px;width:3px;height:3px;border-radius:50%;background:#2a88ee"></div>
<div class="t" style="right:239px;top:698.00px;font-size:10.5px;color:#2a3448;">%</div>
<div class="t" style="right:255px;top:698.00px;font-size:10.5px;color:#2a3448;">8.5</div>
<div class="a" style="left:586px;top:702px;width:94px;height:2px;background:#74b4f2"></div>
<div class="a" style="left:677.3px;top:701.5px;width:3px;height:3px;border-radius:50%;background:#2a88ee"></div>
<div class="t" style="right:51px;top:698.00px;font-size:10.5px;color:#2a3448;">pu</div>
<div class="t" style="right:69.39999999999998px;top:698.00px;font-size:10.5px;color:#2a3448;">0</div>
<div class="a" style="left:780px;top:703px;width:94px;height:2px;background:#74b4f2"></div>
<div class="a" style="left:871.7px;top:702.5px;width:3px;height:3px;border-radius:50%;background:#2a88ee"></div>
<div class="t" style="right:428px;top:719.00px;font-size:10.5px;color:#2a3448;">pu</div>
<div class="t" style="right:446.4px;top:719.00px;font-size:10.5px;color:#2a3448;">0.2</div>
<div class="a" style="left:395px;top:722px;width:94px;height:2px;background:#74b4f2"></div>
<div class="a" style="left:485.9px;top:721.5px;width:3px;height:3px;border-radius:50%;background:#2a88ee"></div>
<div class="t" style="right:239px;top:719.00px;font-size:10.5px;color:#2a3448;">%</div>
<div class="t" style="right:255px;top:719.00px;font-size:10.5px;color:#2a3448;">49</div>
<div class="a" style="left:589px;top:720px;width:94px;height:2px;background:#74b4f2"></div>
<div class="a" style="left:680.2px;top:719.5px;width:3px;height:3px;border-radius:50%;background:#2a88ee"></div>
<div class="t" style="right:51px;top:719.00px;font-size:10.5px;color:#2a3448;">pu</div>
<div class="t" style="right:69.39999999999998px;top:719.00px;font-size:10.5px;color:#2a3448;">0.1</div>
<div class="a" style="left:772px;top:723px;width:94px;height:2px;background:#74b4f2"></div>
<div class="a" style="left:862.9px;top:722.5px;width:3px;height:3px;border-radius:50%;background:#2a88ee"></div>
<div class="t" style="right:428px;top:740.00px;font-size:10.5px;color:#2a3448;">pu</div>
<div class="t" style="right:446.4px;top:740.00px;font-size:10.5px;color:#2a3448;">0.2</div>
<div class="a" style="left:395px;top:743px;width:94px;height:2px;background:#74b4f2"></div>
<div class="a" style="left:485.9px;top:742.5px;width:3px;height:3px;border-radius:50%;background:#2a88ee"></div>
<div class="t" style="right:239px;top:740.00px;font-size:10.5px;color:#2a3448;">%</div>
<div class="t" style="right:255px;top:740.00px;font-size:10.5px;color:#2a3448;">8.8</div>
<div class="a" style="left:586px;top:744px;width:94px;height:2px;background:#74b4f2"></div>
<div class="a" style="left:677.3px;top:743.5px;width:3px;height:3px;border-radius:50%;background:#2a88ee"></div>
<div class="t" style="right:51px;top:740.00px;font-size:10.5px;color:#2a3448;">pu</div>
<div class="t" style="right:69.39999999999998px;top:740.00px;font-size:10.5px;color:#2a3448;">0</div>
<div class="a" style="left:780px;top:745px;width:94px;height:2px;background:#74b4f2"></div>
<div class="a" style="left:871.7px;top:744.5px;width:3px;height:3px;border-radius:50%;background:#2a88ee"></div>
<div class="t" style="right:428px;top:761.00px;font-size:10.5px;color:#2a3448;">pu</div>
<div class="t" style="right:446.4px;top:761.00px;font-size:10.5px;color:#2a3448;">0</div>
<div class="a" style="left:403px;top:766px;width:94px;height:2px;background:#74b4f2"></div>
<div class="a" style="left:494.7px;top:765.5px;width:3px;height:3px;border-radius:50%;background:#2a88ee"></div>
<div class="t" style="right:239.5px;top:757.00px;font-size:10.6px;color:#767676;">n/a</div>
<div class="t" style="right:51.5px;top:757.00px;font-size:10.6px;color:#767676;">n/a</div>
<div class="a" style="left:907px;top:480px;width:15px;height:14px;background:linear-gradient(90deg,#f6f6f6 0,#f6f6f6 6px,#ededed 6px)"></div>
<svg class="a" style="left:912px;top:485px" width="6" height="4"><path d="M0 3.5H5.4L2.7 0.3Z" fill="#2e2e2e"/></svg>
<div class="a" style="left:907px;top:494px;width:15px;height:280px;border:1px solid #bcbcbc;box-shadow:inset 1px 1px 0 #fff,inset -1px 0 0 #fff;box-sizing:border-box;background:linear-gradient(#fff 0,#fff 22px,#f2f2f2 22px,#f2f2f2 27px,#fbfbfb 27px,#fbfbfb 32px,#f6f6f6 32px,#f6f6f6 111px,#fafafa 111px,#fafafa 113px,#efefef 113px,#efefef 226px,#e4e4e4 226px,#e4e4e4 231px,#e9e9e9 231px)"></div>
<div class="a" style="left:907px;top:774px;width:15px;height:15px;background:linear-gradient(90deg,#f6f6f6 0,#f6f6f6 6px,#ededed 6px)"></div>
<svg class="a" style="left:912px;top:780px" width="6" height="4"><path d="M0 0.3H5.4L2.7 3.5Z" fill="#2e2e2e"/></svg>
</body></html>
